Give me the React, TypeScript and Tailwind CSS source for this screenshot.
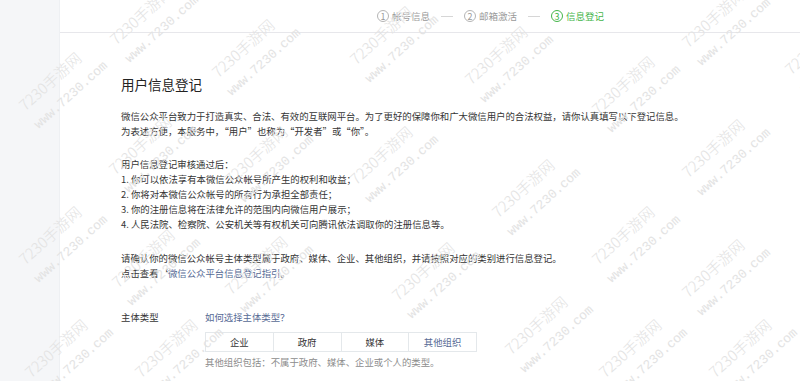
import React from "react";

const marks: [number, number][] = [
  [27, 113], [118, 47], [220, 80], [358, 67], [117, 177], [233, 187], [358, 187],
  [27, 267], [120, 290], [233, 297], [33, 380], [143, 380],
  [473, 87], [600, 117], [690, 50], [690, 180], [500, 220], [600, 267], [690, 300],
  [513, 357], [607, 380], [717, 380], [400, 303], [793, 77],
];

function Watermark({ x, y }: { x: number; y: number }) {
  return (
    <div
      className="absolute pointer-events-none origin-top-left -rotate-[42deg] flex flex-col text-[#e3e3e3] whitespace-nowrap"
      style={{ left: x - 11, top: y - 12 }}
    >
      <span className="text-[15px] leading-[16px] font-light font-['Noto_Sans_CJK_SC',sans-serif]">7230手游网</span>
      <span className="mt-[10px] ml-[-2px] text-[13px] leading-[14px] font-['Liberation_Mono',monospace]">www.7230.com</span>
    </div>
  );
}

function Step({ n, label, active }: { n: number; label: string; active?: boolean }) {
  const c = active ? "text-[#44b549] border-[#44b549]" : "text-[#9a9a9a] border-[#b5b5b5]";
  return (
    <div className={`flex items-center ${active ? "text-[#44b549]" : "text-[#9a9a9a]"}`}>
      <span className={`w-[12px] h-[12px] rounded-full border flex items-center justify-center text-[9px] leading-none ${c}`}>
        {n}
      </span>
      <span className="ml-[3px] text-[9.5px] leading-[12px]">{label}</span>
    </div>
  );
}

function Sep() {
  return <span className="mx-[11px] w-[12px] h-px bg-[#d6d6d6]" />;
}

export default function App() {
  return (
    <div className="relative w-full h-[381px] overflow-hidden bg-white flex font-['Noto_Sans_CJK_SC',sans-serif]">
      <div className="w-[60px] shrink-0 bg-[#f5f6f8] border-r border-[#eef0f3]" />
      <div className="flex-1 flex flex-col">
        <div className="h-[33px] shrink-0 border-b border-[#e7e7eb] flex items-center pl-[317px]">
          <Step n={1} label="帐号信息" />
          <Sep />
          <Step n={2} label="邮箱激活" />
          <Sep />
          <Step n={3} label="信息登记" active />
        </div>
        <div className="pl-[61px] pt-[43px] whitespace-nowrap">
          <h3 className="text-[13.5px] leading-[16px] text-[#222]">用户信息登记</h3>
          <div className="mt-[17px] text-[9.4px] leading-[15px] text-[#353535]">
            <p>微信公众平台致力于打造真实、合法、有效的互联网平台。为了更好的保障你和广大微信用户的合法权益，请你认真填写以下登记信息。</p>
            <p>为表述方便，本服务中，“用户”也称为“开发者”或“你”。</p>
          </div>
          <div className="mt-[18px] text-[9.4px] leading-[15px] text-[#353535]">
            <p>用户信息登记审核通过后：</p>
            <p>1. 你可以依法享有本微信公众帐号所产生的权利和收益；</p>
            <p>2. 你将对本微信公众帐号的所有行为承担全部责任；</p>
            <p>3. 你的注册信息将在法律允许的范围内向微信用户展示；</p>
            <p>4. 人民法院、检察院、公安机关等有权机关可向腾讯依法调取你的注册信息等。</p>
          </div>
          <div className="mt-[19px] text-[9.4px] leading-[15px] text-[#353535]">
            <p>请确认你的微信公众帐号主体类型属于政府、媒体、企业、其他组织，并请按照对应的类别进行信息登记。</p>
            <p>
              点击查看‘<span className="text-[#576b95]">微信公众平台信息登记指引</span>。
            </p>
          </div>
          <div className="mt-[29px] flex text-[9.4px] leading-[15px]">
            <span className="w-[84px] text-[#353535]">主体类型</span>
            <div className="flex flex-col">
              <span className="text-[#576b95]">如何选择主体类型？</span>
              <div className="mt-[7px] flex border border-[#e4e8eb] w-[272px] h-[20px]">
                <span className="flex-1 flex items-center justify-center text-[#353535]">企业</span>
                <span className="flex-1 flex items-center justify-center text-[#353535] border-l border-[#e4e8eb]">政府</span>
                <span className="flex-1 flex items-center justify-center text-[#353535] border-l border-[#e4e8eb]">媒体</span>
                <span className="flex-1 flex items-center justify-center text-[#576b95] border-l border-[#e4e8eb]">其他组织</span>
              </div>
              <span className="mt-[3px] text-[#8d8d8d]">其他组织包括：不属于政府、媒体、企业或个人的类型。</span>
            </div>
          </div>
        </div>
      </div>
      {marks.map(([x, y], i) => (
        <Watermark key={i} x={x} y={y} />
      ))}
    </div>
  );
}
